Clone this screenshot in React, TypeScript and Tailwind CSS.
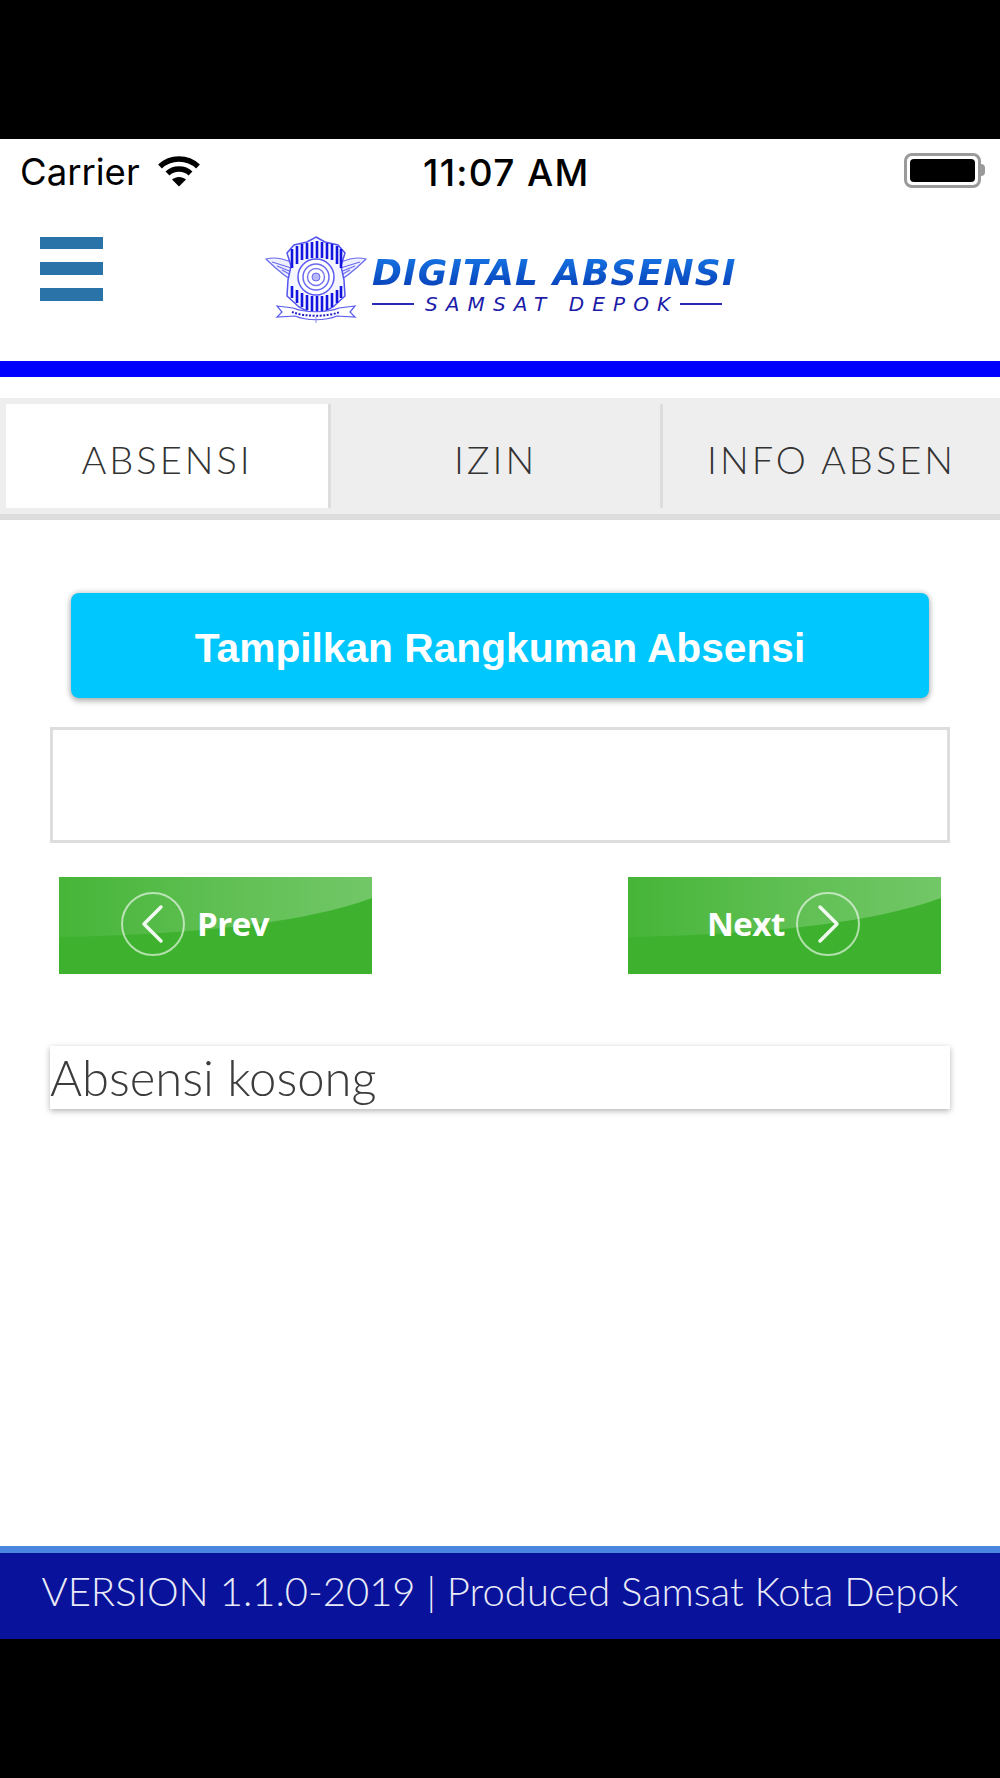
import React from "react";

const lato = "font-['Lato',sans-serif]";

const Wifi = () => (
  <svg width="44" height="32" viewBox="0 0 44 32" fill="none" stroke="#000" strokeWidth="5.5">
    <path d="M3 11.5C13.5 1.5 30.5 1.5 41 11.5" />
    <path d="M10.5 18.5C16.5 12.5 27.5 12.5 33.5 18.5" />
    <path d="M22 31.5L15 24.5C19 21 25 21 29 24.5Z" fill="#000" stroke="none" />
  </svg>
);

const Battery = () => (
  <div className="mb-[4px] flex items-center">
    <div className="flex h-[35px] w-[77px] items-center justify-center rounded-[8px] border-[3px] border-[#9a9a9a] p-[3px]">
      <div className="h-full w-full rounded-[4px] bg-black"></div>
    </div>
    <div className="h-[12px] w-[4px] rounded-r-full bg-[#9a9a9a]"></div>
  </div>
);

const Emblem = () => (
  <svg width="102" height="88" viewBox="0 0 102 88" fill="none" stroke="#1c1ce0">
    <g strokeWidth="1.2" stroke="#6a6af0" fill="#eef0ff">
      <path d="M1 23C12 20 22 24 33 29L37 50C24 44 12 34 1 23Z" />
      <path d="M101 23C90 20 80 24 69 29L65 50C78 44 90 34 101 23Z" />
      <path d="M7 26L33 34M12 30L34 39M17 34L35 44M95 26L69 34M90 30L68 39M85 34L67 44" />
    </g>
    <path d="M51 1L60 6L73 9L80 17L76 30L79 44L80 60L68 71L51 80L34 71L22 60L23 44L26 30L22 17L29 9L42 6Z" fill="#f4f5ff" strokeWidth="1.5" stroke="#5555ee" />
    <g stroke="#1414e0" strokeWidth="2.6">
      <path d="M27 13V32M32 10V28M37 8V24M42 7V23M47 6V22M52 5V22M57 6V22M62 7V23M67 8V24M72 10V28M76 13V32" />
      <path d="M27 50V62M32 54V67M37 57V71M42 59V74M47 60V76M52 60V77M57 60V76M62 59V74M67 57V71M72 54V67M76 50V62" />
    </g>
    <circle cx="51" cy="41" r="18" fill="#fff" stroke="#5a5af0" strokeWidth="1.5" />
    <circle cx="51" cy="41" r="13" stroke="#6a6af0" strokeWidth="1.5" />
    <circle cx="51" cy="41" r="8.5" stroke="#7a7af0" strokeWidth="1.5" />
    <circle cx="51" cy="41" r="4" fill="#b8b8f8" stroke="#6a6af0" />
    <path d="M12 70L28 72C40 77 62 77 74 72L90 70L85 76L90 81L72 80C60 85 42 85 30 80L12 81L17 76Z" fill="#fff" stroke="#5a5af0" strokeWidth="1.2" />
    <path d="M27 76C40 81 62 81 75 76" stroke="#2222c8" strokeWidth="2" strokeDasharray="2 1.5" />
    <path d="M51 81V87" stroke="#8a8af0" />
  </svg>
);

const Logo = () => (
  <div className="flex items-start">
    <Emblem />
    <div className="ml-[5px] flex w-[368px] flex-col">
      <span className="mt-[19px] whitespace-nowrap bg-gradient-to-b from-[#1a78e6] to-[#0a3ab4] bg-clip-text font-['DejaVu_Sans',sans-serif] text-[36px] leading-[36px] font-bold tracking-[1.2px] text-transparent italic">
        DIGITAL ABSENSI
      </span>
      <div className="mt-[2px] flex items-center">
        <div className="h-[2px] w-[42px] bg-[#2a2ab8]"></div>
        <span className="ml-[11px] font-['DejaVu_Sans',sans-serif] text-[20px] leading-[22px] tracking-[8.1px] whitespace-nowrap text-[#1c1ca8] italic">
          SAMSAT DEPOK
        </span>
        <div className="ml-[2px] h-[2px] w-[42px] bg-[#2a2ab8]"></div>
      </div>
    </div>
  </div>
);

const tabs = ["ABSENSI", "IZIN", "INFO ABSEN"];

const Gloss = () => (
  <svg className="absolute inset-0" width="313" height="97" viewBox="0 0 313 97">
    <defs>
      <linearGradient id="gloss" x1="0" y1="0" x2="1" y2="0">
        <stop offset="0" stopColor="#fff" stopOpacity="0.04" />
        <stop offset="0.5" stopColor="#fff" stopOpacity="0.17" />
        <stop offset="1" stopColor="#fff" stopOpacity="0.27" />
      </linearGradient>
    </defs>
    <path d="M0 60C120 58 240 48 313 21V0H0Z" fill="url(#gloss)" />
  </svg>
);

const NavCircle = ({ dir }: { dir: "prev" | "next" }) => (
  <svg className="relative mb-[4px]" width="66" height="66" viewBox="0 0 66 66" fill="none">
    <circle cx="33" cy="33" r="31" stroke="#fff" strokeOpacity="0.6" strokeWidth="2" />
    <path
      d={dir === "prev" ? "M41 16L24 33L41 50" : "M25 16L42 33L25 50"}
      stroke="#fff"
      strokeOpacity="0.92"
      strokeWidth="3.5"
      strokeLinecap="round"
      strokeLinejoin="round"
    />
  </svg>
);

const NavButton = ({ dir }: { dir: "prev" | "next" }) => (
  <div className="relative flex h-[97px] w-[313px] items-center bg-[#3eb22f]">
    <Gloss />
    {dir === "prev" ? (
      <>
        <div className="ml-[61px]">
          <NavCircle dir="prev" />
        </div>
        <span className="relative mb-[4px] ml-[11px] font-['Open_Sans',sans-serif] text-[33px] font-bold tracking-[-0.5px] text-white">
          Prev
        </span>
      </>
    ) : (
      <>
        <span className="relative mb-[4px] ml-[79px] font-['Open_Sans',sans-serif] text-[33px] font-bold tracking-[-0.5px] text-white">
          Next
        </span>
        <div className="ml-[10px]">
          <NavCircle dir="next" />
        </div>
      </>
    )}
  </div>
);

const App = () => {
  return (
    <div className="flex h-[1778px] w-full flex-col overflow-hidden bg-black">
      <div className="h-[139px] shrink-0 bg-black"></div>

      <div className="flex min-h-0 flex-1 flex-col bg-white">
        {/* status bar */}
        <div className="relative flex h-[66px] shrink-0 items-center pr-[15px] pl-[20px]">
          <span className="font-['Inter',sans-serif] text-[36.5px] leading-none text-black">Carrier</span>
          <div className="mb-[3px] ml-[17px]">
            <Wifi />
          </div>
          <span className="absolute left-[423px] font-['Inter',sans-serif] text-[37px] leading-none font-medium tracking-[1.3px] text-black">
            11:07 AM
          </span>
          <div className="ml-auto">
            <Battery />
          </div>
        </div>

        {/* header */}
        <div className="flex h-[156px] shrink-0 items-start pt-[31px]">
          <div className="ml-[40px] flex w-[63px] flex-col gap-[13px] pt-px">
            <div className="h-[12px] bg-[#2a73a8]"></div>
            <div className="h-[13px] bg-[#2a73a8]"></div>
            <div className="h-[13px] bg-[#2a73a8]"></div>
          </div>
          <div className="ml-[162px]">
            <Logo />
          </div>
        </div>
        <div className="h-[16px] shrink-0 bg-[#0000ff]"></div>

        {/* tabs */}
        <div className="mt-[21px] flex h-[122px] shrink-0 items-start border-b-[6px] border-[#dddddd] bg-[#eeeeee] pt-[6px] pl-[6px]">
          {tabs.map((tab, i) => (
            <div
              key={tab}
              className={
                i === 0
                  ? "flex h-[104px] w-[325px] items-center justify-center border-r-[3px] border-[#dddddd] bg-white pt-[6px]"
                  : i === 1
                    ? "flex h-[104px] w-[332px] items-center justify-center border-r-[3px] border-[#dddddd] pt-[6px]"
                    : "flex h-[104px] flex-1 items-center justify-center pt-[6px]"
              }
            >
              <span className={`${lato} text-[38px] font-light tracking-[3px] text-[#333333]`}>{tab}</span>
            </div>
          ))}
        </div>

        {/* content */}
        <div className="flex min-h-0 flex-1 flex-col">
          <div className="mx-[71px] mt-[73px] flex h-[105px] items-center justify-center rounded-[8px] bg-[#00c8ff] pt-[6px] shadow-[0_0_4px_2px_rgba(0,0,0,0.14),0_4px_6px_rgba(0,0,0,0.2)]">
            <span className="font-['Liberation_Sans',sans-serif] text-[40.7px] font-bold text-white">
              Tampilkan Rangkuman Absensi
            </span>
          </div>

          <div className="mx-[50px] mt-[29px] h-[116px] border-[3px] border-[#dddddd] bg-white"></div>

          <div className="mt-[34px] flex justify-between pr-[59px] pl-[59px]">
            <NavButton dir="prev" />
            <NavButton dir="next" />
          </div>

          <div className="mx-[50px] mt-[72px] h-[63px] bg-white shadow-[0_2px_6px_rgba(0,0,0,0.3)]">
            <span className={`${lato} block text-[49px] leading-[63px] font-light text-[#3c3c3c]`}>Absensi kosong</span>
          </div>
        </div>

        {/* footer */}
        <div className="h-[7px] shrink-0 bg-[#4a86e0]"></div>
        <div className="flex h-[86px] shrink-0 items-center justify-center bg-[#08129a] pb-[11px]">
          <span className={`${lato} text-[40px] font-light whitespace-nowrap text-[#e8eaf8]`}>
            VERSION 1.1.0-2019 | Produced Samsat Kota Depok
          </span>
        </div>
      </div>

      <div className="h-[139px] shrink-0 bg-black"></div>
    </div>
  );
};

export default App;
